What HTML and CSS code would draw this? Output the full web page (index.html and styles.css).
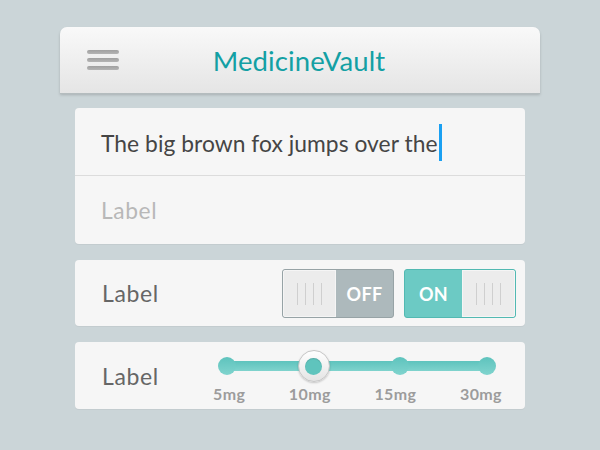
FILE: index.html
```html
<!DOCTYPE html>
<html>
<head>
<meta charset="utf-8">
<link rel="stylesheet" href="styles.css">
</head>
<body>
<div class="app">
  <header class="bar">
    <div class="menu"><span></span><span></span><span></span></div>
    <h1 class="title">MedicineVault</h1>
    <div></div>
  </header>
  <main class="cards">
    <section class="card fields">
      <div class="field filled">The big brown fox jumps over the<span class="caret"></span></div>
      <div class="field placeholder">Label</div>
    </section>
    <section class="card row">
      <div class="label">Label</div>
      <div class="toggles">
        <div class="toggle off"><div class="thumb"><i></i><i></i><i></i><i></i></div><div class="state">OFF</div></div>
        <div class="toggle on"><div class="state">ON</div><div class="thumb"><i></i><i></i><i></i><i></i></div></div>
      </div>
    </section>
    <section class="card row slider-card">
      <div class="label slabel">Label</div>
      <div class="slider">
        <div class="track">
          <span class="dot"></span>
          <span class="knob"><span class="knob-core"></span></span>
          <span class="dot"></span>
          <span class="dot"></span>
        </div>
        <div class="ticks">
          <span>5mg</span><span>10mg</span><span>15mg</span><span>30mg</span>
        </div>
      </div>
    </section>
  </main>
</div>
</body>
</html>
```
FILE: styles.css
```css
html, body { margin: 0; padding: 0; }
body {
  background: #cbd5d8;
  font-family: Lato, "Open Sans", sans-serif;
  width: 600px;
  height: 450px;
  overflow: hidden;
}
.app {
  width: 480px;
  margin-left: 60px;
  padding-top: 27px;
}
.bar {
  height: 66px;
  box-sizing: border-box;
  display: grid;
  grid-template-columns: 1fr auto 1fr;
  align-items: center;
  background: linear-gradient(#f9f9f9, #e5e5e5);
  border-radius: 7px 7px 0 0;
  box-shadow: 0 1px 0 #b4bcbe, 0 2px 3px rgba(0,0,0,0.18);
}
.menu {
  padding-left: 27px;
  display: flex;
  flex-direction: column;
  gap: 4px;
}
.menu span {
  display: block;
  width: 32px;
  height: 4px;
  border-radius: 2px;
  background: linear-gradient(#a0a0a0, #b4b4b4);
}
.title {
  margin: 0 0 0 -2px;
  font-weight: 400;
  font-size: 27.5px;
  color: #13a0a4;
  letter-spacing: 0.1px;
}
.cards {
  margin: 15px 15px 0;
  display: flex;
  flex-direction: column;
  gap: 16px;
}
.card {
  background: #f6f6f6;
  border-radius: 4px;
  box-shadow: 0 1px 0 #c3cccf;
}
.fields .field {
  height: 68px;
  box-sizing: border-box;
  padding-left: 26px;
  display: flex;
  align-items: center;
  font-size: 22.8px;
  letter-spacing: 0.05px;
}
.fields .filled {
  color: #454545;
  border-bottom: 1px solid #dcdcdc;
  padding-top: 2px;
}
.caret {
  display: inline-block;
  width: 3px;
  height: 37px;
  background: #1aa0f2;
  margin-left: 1px;
}
.fields .placeholder {
  color: #b8b8b8;
  letter-spacing: 0.6px;
}
.row {
  display: flex;
  align-items: center;
  height: 66px;
  padding-left: 27px;
  padding-right: 9px;
}
.label {
  font-size: 23px;
  color: #666;
  letter-spacing: 0.6px;
}
.toggles {
  margin-left: auto;
  display: flex;
  gap: 10px;
  margin-top: 1px;
}
.toggle {
  width: 112px;
  height: 49px;
  box-sizing: border-box;
  border-radius: 3px;
  display: flex;
  overflow: hidden;
}
.toggle.off {
  background: #adb9bc;
  border: 1px solid #97a3a6;
}
.toggle.on {
  background: #6ccac4;
  border: 1px solid #52b9b2;
}
.thumb {
  width: 53px;
  background: #ececec;
  display: flex;
  justify-content: center;
  align-items: center;
  gap: 7px;
  box-shadow: inset 0 0 0 1px #f5f5f5;
}
.toggle.off .thumb { border-radius: 2px 0 0 2px; }
.toggle.on .thumb { border-radius: 0 2px 2px 0; }
.thumb i {
  display: block;
  width: 1px;
  height: 22px;
  background: #cfcfcf;
}
.state {
  flex: 1;
  display: flex;
  align-items: center;
  justify-content: center;
  color: #fff;
  font-weight: 700;
  font-size: 18px;
  letter-spacing: 0.3px;
}
.slider-card {
  height: 67px;
  align-items: flex-start;
}
.slabel {
  width: 116px;
  flex: none;
  padding-top: 20px;
}
.slider {
  width: 278px;
  padding-top: 6px;
}
.track {
  height: 36px;
  display: flex;
  justify-content: space-between;
  align-items: center;
  position: relative;
}
.track::before {
  content: "";
  position: absolute;
  left: 9px;
  right: 9px;
  top: 13px;
  height: 10px;
  background: linear-gradient(#5ec3bd, #7fd3cd);
}
.dot {
  position: relative;
  width: 18px;
  height: 18px;
  border-radius: 50%;
  background: linear-gradient(#5ec3bd, #80d4ce);
}
.knob {
  position: relative;
  z-index: 1;
  width: 32px;
  height: 32px;
  margin: 0 -7px;
  border-radius: 50%;
  box-sizing: border-box;
  background: linear-gradient(#ffffff, #e4e4e4);
  border: 1px solid #c6c6c6;
  box-shadow: 0 1px 2px rgba(0,0,0,0.2);
  display: flex;
  align-items: center;
  justify-content: center;
}
.knob-core {
  width: 17px;
  height: 17px;
  border-radius: 50%;
  background: #5fc4bd;
  box-shadow: inset 0 1px 1px rgba(0,0,0,0.12);
}
.ticks {
  display: flex;
  justify-content: space-between;
  margin: 1px -6px 0 -5px;
}
.ticks span {
  white-space: nowrap;
  font-size: 16px;
  font-weight: 700;
  color: #9c9c9c;
  line-height: 18px;
  letter-spacing: 0.4px;
}
```
